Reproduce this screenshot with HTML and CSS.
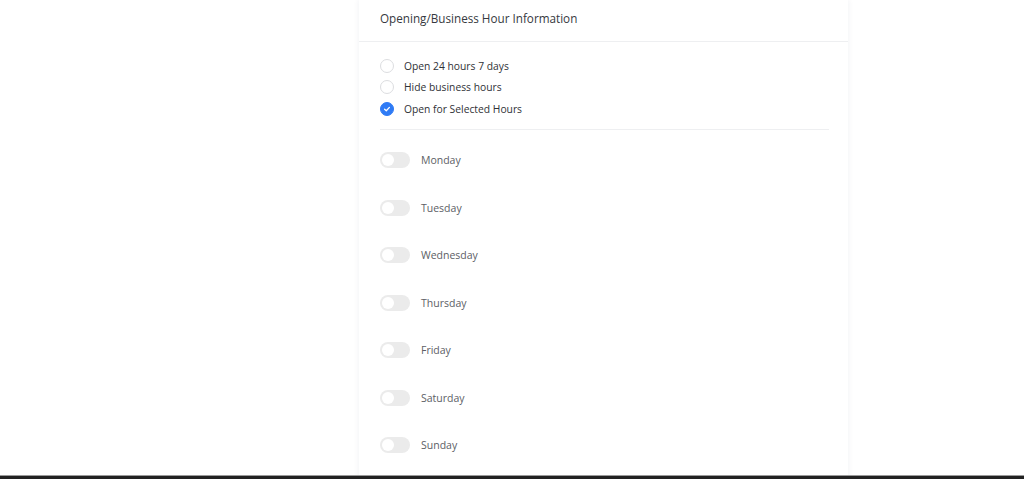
FILE: index.html
```html
<!DOCTYPE html>
<html lang="en">
<head>
  <meta charset="UTF-8">
  <meta name="viewport" content="width=device-width, initial-scale=1.0">
  <title>Opening/Business Hour Information</title>
  <link rel="stylesheet" href="styles.css">
</head>
<body>
  <div class="page">
    <div class="card">
      <div class="card-header">Opening/Business Hour Information</div>
      <div class="card-body">
        <!-- 영업 시간 옵션 -->
        <div class="radio-group">
          <label class="radio-row"><span class="radio"></span>Open 24 hours 7 days</label>
          <label class="radio-row"><span class="radio"></span>Hide business hours</label>
          <label class="radio-row"><span class="radio checked">
            <svg width="8" height="8" viewBox="0 0 8 8"><path d="M1.6 4.2 L3.3 5.8 L6.4 2.4" fill="none" stroke="#fff" stroke-width="1.3" stroke-linecap="round" stroke-linejoin="round"/></svg>
          </span>Open for Selected Hours</label>
        </div>
        <div class="separator"></div>
        <!-- 요일별 토글 -->
        <ul class="day-list">
          <li class="day-row"><span class="toggle"></span>Monday</li>
          <li class="day-row"><span class="toggle"></span>Tuesday</li>
          <li class="day-row"><span class="toggle"></span>Wednesday</li>
          <li class="day-row"><span class="toggle"></span>Thursday</li>
          <li class="day-row"><span class="toggle"></span>Friday</li>
          <li class="day-row"><span class="toggle"></span>Saturday</li>
          <li class="day-row"><span class="toggle"></span>Sunday</li>
        </ul>
      </div>
    </div>
  </div>
  <div class="taskbar"></div>
</body>
</html>
```

FILE: styles.css
```css
body {
  font-family: "Open Sans", Arial, sans-serif;
  margin: 0;
  padding: 0;
  background-color: #fff;
  color: #333;
  overflow: hidden;
}
.page {
  padding-left: 359px;
}
.card {
  width: 489px;
  height: 479px;
  background-color: #fff;
  box-shadow: 0 0 6px rgba(30, 40, 80, 0.07);
}
.card-header {
  padding: 9px 21px 14px;
  line-height: 18px;
  font-size: 11.7px;
  font-weight: 500;
  color: #363940;
  border-bottom: 1px solid #eeeff1;
}
.card-body {
  padding: 13px 19px 0 21px;
}
.radio-group {
  display: flex;
  flex-direction: column;
}
.radio-row {
  display: flex;
  align-items: center;
  gap: 10px;
  height: 21.5px;
  font-size: 10.3px;
  color: #2f3136;
}
.radio {
  width: 12px;
  height: 12px;
  border: 1px solid #dcdde0;
  border-radius: 50%;
  display: flex;
  align-items: center;
  justify-content: center;
}
.radio.checked {
  background-color: #2f7bf5;
  border-color: #2f7bf5;
}
.separator {
  height: 1px;
  background-color: #eeeff1;
  margin-top: 9.5px;
}
.day-list {
  list-style-type: none;
  margin: 22px 0 0;
  padding: 0;
  display: flex;
  flex-direction: column;
  gap: 31.5px;
}
.day-row {
  display: flex;
  align-items: center;
  gap: 11px;
  height: 16px;
  font-size: 10.5px;
  color: #5c5e65;
}
.toggle {
  width: 30px;
  height: 16px;
  border-radius: 8px;
  background-color: #ebebeb;
  position: relative;
}
.toggle::after {
  content: "";
  position: absolute;
  left: 2px;
  top: 2px;
  width: 12px;
  height: 12px;
  border-radius: 50%;
  background-color: #fff;
}
.taskbar {
  position: fixed;
  left: 0;
  right: 0;
  bottom: 0;
  height: 3px;
  background-color: #222;
  border-top: 1px solid #9a9a9a;
}
```
